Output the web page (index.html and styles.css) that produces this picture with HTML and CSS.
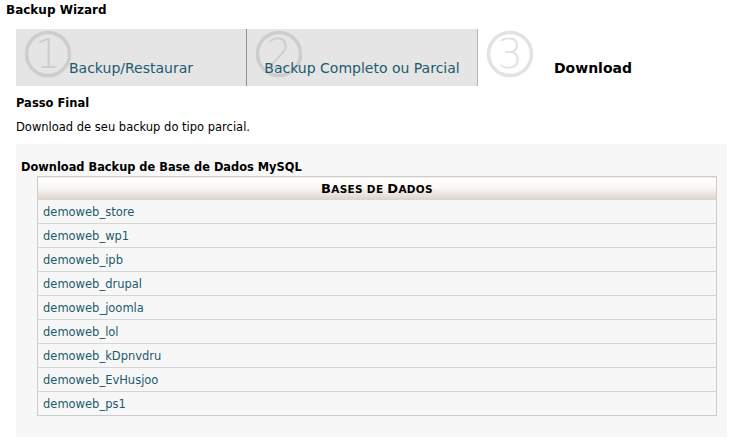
FILE: index.html
```html
<!DOCTYPE html>
<html lang="pt">
<head>
    <meta charset="UTF-8">
    <title>Backup Wizard</title>
    <link rel="stylesheet" href="styles.css">
</head>
<body>
    <h1 class="pageTitle">Backup Wizard</h1>
    <div class="steps">
        <div class="step">
            <svg class="stepNum" width="48" height="48" viewBox="0 0 48 48">
                <circle cx="24" cy="24" r="21.5" fill="none" stroke="#cdcdcd" stroke-width="3.5"/>
                <text x="24" y="38" text-anchor="middle" font-size="40" font-family="DejaVu Sans, sans-serif" font-weight="200" fill="#cdcdcd">1</text>
            </svg>
            <span class="stepLabel">Backup/Restaurar</span>
        </div>
        <div class="step">
            <svg class="stepNum" width="48" height="48" viewBox="0 0 48 48">
                <circle cx="24" cy="24" r="21.5" fill="none" stroke="#cdcdcd" stroke-width="3.5"/>
                <text x="24" y="38" text-anchor="middle" font-size="40" font-family="DejaVu Sans, sans-serif" font-weight="200" fill="#cdcdcd">2</text>
            </svg>
            <span class="stepLabel">Backup Completo ou Parcial</span>
        </div>
        <div class="step current">
            <svg class="stepNum" width="48" height="48" viewBox="0 0 48 48">
                <circle cx="24" cy="24" r="21.5" fill="none" stroke="#e2e2e2" stroke-width="3.5"/>
                <text x="24" y="38" text-anchor="middle" font-size="40" font-family="DejaVu Sans, sans-serif" font-weight="200" fill="#e2e2e2">3</text>
            </svg>
            <span class="stepLabel">Download</span>
        </div>
    </div>
    <h2 class="stepTitle">Passo Final</h2>
    <p class="stepText">Download de seu backup do tipo parcial.</p>
    <div class="panel">
        <h3 class="panelTitle">Download Backup de Base de Dados MySQL</h3>
        <table class="dbTable">
            <thead>
                <tr><th><span class="cap">B</span>ASES DE <span class="cap">D</span>ADOS</th></tr>
            </thead>
            <tbody>
                <tr><td><a href="#">demoweb_store</a></td></tr>
                <tr><td><a href="#">demoweb_wp1</a></td></tr>
                <tr><td><a href="#">demoweb_ipb</a></td></tr>
                <tr><td><a href="#">demoweb_drupal</a></td></tr>
                <tr><td><a href="#">demoweb_joomla</a></td></tr>
                <tr><td><a href="#">demoweb_lol</a></td></tr>
                <tr><td><a href="#">demoweb_kDpnvdru</a></td></tr>
                <tr><td><a href="#">demoweb_EvHusjoo</a></td></tr>
                <tr><td><a href="#">demoweb_ps1</a></td></tr>
            </tbody>
        </table>
    </div>
</body>
</html>
```

FILE: styles.css
```css
body
{
    margin: 0;
    padding: 3px 6px;
    font-family: Verdana, "DejaVu Sans", sans-serif;
    font-size: 11.5px;
    color: #000;
    background: #fff;
}
.pageTitle
{
    margin: 0;
    font-size: 12px;
    font-weight: bold;
    line-height: 14px;
}
.steps
{
    display: flex;
    margin: 12px 0 0 10px;
    height: 57px;
}
.step
{
    position: relative;
    width: 230px;
    height: 27px;
    background: #e5e5e5;
    border-right: 1px solid #8f8f8f;
    text-align: center;
    padding-top: 30px;
}
.step:nth-child(2)
{
    border-right-color: #b5b5b5;
}
.step.current
{
    background: #fff;
    border-right: none;
}
.stepNum
{
    position: absolute;
    left: 8px;
    top: 1px;
}
.stepLabel
{
    position: relative;
    font-size: 14px;
    line-height: 18px;
    color: #1d5a6d;
}
.current .stepLabel
{
    color: #000;
    font-weight: bold;
}
.stepTitle
{
    margin: 10px 0 0 10px;
    font-size: 11.5px;
    font-weight: bold;
    line-height: 14px;
}
.stepText
{
    margin: 10px 0 0 10px;
    line-height: 14px;
}
.panel
{
    margin: 10px 0 0 10px;
    width: 711px;
    background: #f7f7f7;
    padding: 16px 0 21px 0;
}
.panelTitle
{
    margin: 0 0 2px 5px;
    font-size: 11.4px;
    font-weight: bold;
    line-height: 14px;
}
.dbTable
{
    margin-left: 21px;
    width: 680px;
    border-collapse: collapse;
    border: 1px solid #cccccc;
}
.dbTable th
{
    height: 22px;
    padding: 0;
    font-size: 10.5px;
    font-weight: bold;
    text-align: center;
    letter-spacing: 0.3px;
    background: linear-gradient(#ffffff 0%, #faf8f6 45%, #ded5cc 100%);
    border-bottom: 1px solid #d6d6d6;
}
.dbTable th .cap
{
    font-size: 13px;
}
.dbTable td
{
    height: 23px;
    padding: 0 5px;
    border-top: 1px solid #d6d6d6;
    background: #f7f7f7;
}
.dbTable a
{
    color: #1d5a6d;
    text-decoration: none;
}
```
